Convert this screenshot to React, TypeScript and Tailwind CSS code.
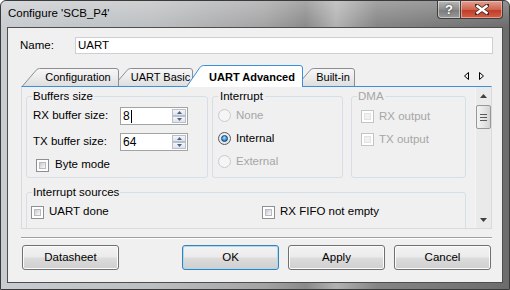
import React from "react";

const ui = "font-['Liberation_Sans',Arial,sans-serif]";

function CheckBox({ disabled = false }: { disabled?: boolean }) {
  return (
    <div
      className={`w-[13px] h-[13px] shrink-0 border p-[2px] bg-white ${
        disabled ? "border-[#c4c4c4]" : "border-[#8e8f8f]"
      }`}
    >
      <div
        className={`w-full h-full ${
          disabled
            ? "bg-[#f1f1f1] border border-[#e2e2e2]"
            : "bg-[linear-gradient(135deg,#c6c9ce,#eceded_70%,#f7f7f7)] border border-[#b8bcc2]"
        }`}
      />
    </div>
  );
}

function Radio({ checked = false, disabled = false }: { checked?: boolean; disabled?: boolean }) {
  return (
    <div
      className={`w-[13px] h-[13px] shrink-0 rounded-full border flex items-center justify-center ${
        disabled
          ? "border-[#cacaca] bg-[#f5f5f5]"
          : "border-[#555b63] bg-[radial-gradient(circle_at_50%_40%,#ffffff,#d6d9dc)]"
      }`}
    >
      {checked && (
        <div className="w-[7px] h-[7px] rounded-full border border-[#173c66] bg-[radial-gradient(circle_at_45%_35%,#9fe2ff,#1f78cf_75%)]" />
      )}
    </div>
  );
}

function SpinBtn({ up = false }: { up?: boolean }) {
  return (
    <div className="h-[7px] w-full border border-[#b9c0cb] bg-[linear-gradient(#f6f7f9,#dde2ea)] flex items-center justify-center">
      <svg width="5" height="3" viewBox="0 0 5 3">
        <path d={up ? "M0 3 L2.5 0 L5 3 Z" : "M0 0 L2.5 3 L5 0 Z"} fill="#4d6087" />
      </svg>
    </div>
  );
}

function SpinBox({ value, caret = false }: { value: string; caret?: boolean }) {
  return (
    <div className="w-[68px] h-[18px] border border-[#a3a3a3] bg-white flex items-center">
      <div className="flex-1 pl-[2px] flex items-center text-[12px] leading-[14px] text-black">
        {value}
        {caret && <span className="w-px h-[13px] bg-black ml-px" />}
      </div>
      <div className="w-[14px] h-[14px] mr-[1px] flex flex-col">
        <SpinBtn up />
        <SpinBtn />
      </div>
    </div>
  );
}

function Tab({
  label,
  w,
  idx,
  selected = false,
  className,
}: {
  label: string;
  w: number;
  idx: number;
  selected?: boolean;
  className: string;
}) {
  const t = selected ? 0.5 : 3.5;
  const b = selected ? 22 : 21;
  const d = `M0.5 ${b} L13.5 ${t + 2.5} Q15 ${t} 17.5 ${t} H${w - 3} Q${w - 0.5} ${t} ${w - 0.5} ${t + 2.5} V${b}`;
  return (
    <div
      className={`relative h-[21px] shrink-0 flex items-end justify-center pl-[17px] pr-[2px] pb-[2px] ${className}`}
    >
      <svg className="absolute left-0 top-0 overflow-visible" width={w} height={22}>
        <defs>
          <linearGradient id={`tabg${idx}`} x1="0" y1="0" x2="0" y2="1">
            <stop offset="0" stopColor="#f7f7f7" />
            <stop offset="0.5" stopColor="#ececec" />
            <stop offset="1" stopColor="#dedede" />
          </linearGradient>
        </defs>
        <path
          d={d}
          fill={selected ? "#ffffff" : `url(#tabg${idx})`}
          stroke={selected ? "#3c8fdc" : "#8c8e94"}
          strokeWidth="1"
        />
      </svg>
      <span
        className={`relative text-[11px] leading-[14px] text-black whitespace-nowrap ${
          selected ? "font-bold" : ""
        }`}
      >
        {label}
      </span>
    </div>
  );
}

function WinButton({ label, focused = false, className }: { label: string; focused?: boolean; className: string }) {
  return (
    <div
      className={`h-[25px] w-[97px] rounded-[3px] border flex items-center justify-center text-[11.5px] text-black bg-[linear-gradient(#f3f3f3_0%,#ebebeb_48%,#dcdcdc_52%,#cfcfcf_100%)] ${
        focused
          ? "border-[#3c7fb1] shadow-[inset_0_0_0_1px_#a9dbf6]"
          : "border-[#707070] shadow-[inset_0_0_0_1px_#fcfcfc]"
      } ${className}`}
    >
      {label}
    </div>
  );
}

export default function App() {
  return (
    <div className={`${ui} w-[510px] h-[290px] overflow-hidden bg-white`}>
      <div className="w-[510px] h-[290px] rounded-t-[6px] border border-[#3a3a3a] flex flex-col bg-[linear-gradient(90deg,#c9ccd0_0%,#bcbfc1_30%,#a3a3a4_52%,#8a8a8a_60%,#b2b2b2_66%,#858585_74%,#6c6c6c_100%)]">
        {/* title bar */}
        <div className="h-[26px] flex bg-[linear-gradient(rgba(255,255,255,0.25),rgba(255,255,255,0))] rounded-t-[5px]">
          <div className="self-center ml-[7px] text-[11.5px] text-black">Configure 'SCB_P4'</div>
          <div className="ml-auto mr-[6px] flex h-[18px]">
            <div className="w-[24px] h-full rounded-bl-[4px] border border-t-0 border-[#3d3d3d] shadow-[inset_0_0_0_1px_rgba(255,255,255,0.45)] bg-[linear-gradient(#b9b9b9,#8d8d8d_50%,#7a7a7a_51%,#9a9a9a)] flex items-center justify-center text-white font-bold text-[13px] leading-none [text-shadow:0_0_2px_#222]">
              ?
            </div>
            <div className="w-[42px] h-full rounded-br-[4px] border border-t-0 border-l-0 border-[#3d3d3d] shadow-[inset_0_0_0_1px_rgba(255,210,200,0.55)] bg-[linear-gradient(#e3a08f,#cf6450_50%,#c03a24_51%,#d1604a)] flex items-center justify-center">
              <svg width="14" height="11" viewBox="0 0 14 11">
                <path
                  d="M1 1 L13 10 M13 1 L1 10"
                  stroke="#4a2a25"
                  strokeWidth="4"
                  strokeLinecap="square"
                />
                <path d="M1.5 1.5 L12.5 9.5 M12.5 1.5 L1.5 9.5" stroke="#ffffff" strokeWidth="2.4" />
              </svg>
            </div>
          </div>
        </div>

        {/* client area */}
        <div className="ml-[6px] w-[496px] h-[256px] border border-[#4e4e4e] bg-[#f0f0f0] flex flex-col">
          {/* name */}
          <div className="mt-[9px] h-[17px] flex items-center">
            <div className="pl-[12px] w-[67px] text-[11.5px] text-black">Name:</div>
            <div className="w-[418px] h-[17px] border border-[#cbd0d5] bg-white flex items-center pl-[2px] text-[11.5px] text-black">
              UART
            </div>
          </div>

          {/* tabs */}
          <div className="relative z-10 mt-[11px] h-[21px] flex items-start pl-[14px]">
            <Tab label="Configuration" w={97} idx={1} className="w-[97px] z-[4]" />
            <Tab label="UART Basic" w={80} idx={2} className="w-[80px] ml-[-6px] z-[3]" />
            <Tab label="UART Advanced" w={117} idx={3} selected className="w-[117px] ml-[-7px] z-[5]" />
            <Tab label="Built-in" w={59} idx={4} className="w-[59px] ml-[-7px] z-[1]" />
            <div className="ml-auto mr-[17px] mt-[7px]">
              <svg width="21" height="8" viewBox="0 0 21 8">
                <path d="M4.5 0.5 L0.5 4 L4.5 7.5 Z" fill="none" stroke="#000" />
                <path d="M15.5 0.5 L19.5 4 L15.5 7.5 Z" fill="none" stroke="#000" />
              </svg>
            </div>
          </div>

          {/* tab panel */}
          <div className="ml-[13px] w-[471px] h-[143px] border-t border-t-[#3c8fdc] border-x border-b border-[#dadada] flex">
            <div className="w-[453px] h-full overflow-hidden text-[11.5px] text-black">
              <div className="flex items-start ml-[4px] mt-[2px]">
                {/* Buffers size */}
                <fieldset className="w-[182px] h-[89px] border border-[#d5dfe5] rounded-[3px] px-[5px] shrink-0">
                  <legend className="px-[1px] leading-[14px]">Buffers size</legend>
                  <div className="flex flex-col">
                    <div className="mt-[4px] flex items-center h-[18px]">
                      <div className="w-[88px] pl-px">RX buffer size:</div>
                      <SpinBox value="8" caret />
                    </div>
                    <div className="mt-[8px] flex items-center h-[18px]">
                      <div className="w-[88px] pl-px">TX buffer size:</div>
                      <SpinBox value="64" />
                    </div>
                    <div className="mt-[7px] flex items-center gap-[6px] ml-[4px] h-[14px]">
                      <CheckBox />
                      <span>Byte mode</span>
                    </div>
                  </div>
                </fieldset>

                {/* Interrupt */}
                <fieldset className="ml-[4px] w-[131px] h-[89px] border border-[#d5dfe5] rounded-[3px] px-[5px] shrink-0">
                  <legend className="px-[2px] leading-[14px]">Interrupt</legend>
                  <div className="flex flex-col gap-[10px] mt-[6px]">
                    <div className="flex items-center gap-[5px] h-[13px] text-[#a6a6a6]">
                      <Radio disabled />
                      <span>None</span>
                    </div>
                    <div className="flex items-center gap-[5px] h-[13px]">
                      <Radio checked />
                      <span>Internal</span>
                    </div>
                    <div className="flex items-center gap-[5px] h-[13px] text-[#a6a6a6]">
                      <Radio disabled />
                      <span>External</span>
                    </div>
                  </div>
                </fieldset>

                {/* DMA */}
                <fieldset className="ml-[8px] w-[115px] h-[89px] border border-[#d5dfe5] rounded-[3px] px-[5px] shrink-0 text-[#a6a6a6]">
                  <legend className="px-[1px] leading-[14px]">DMA</legend>
                  <div className="flex flex-col gap-[10px] mt-[7px] ml-[4px]">
                    <div className="flex items-center gap-[5px] h-[13px]">
                      <CheckBox disabled />
                      <span>RX output</span>
                    </div>
                    <div className="flex items-center gap-[5px] h-[13px]">
                      <CheckBox disabled />
                      <span>TX output</span>
                    </div>
                  </div>
                </fieldset>
              </div>

              {/* Interrupt sources */}
              <fieldset className="ml-[4px] mt-[7px] w-[440px] h-[70px] border border-[#d5dfe5] rounded-[3px] px-[5px]">
                <legend className="px-[1px] leading-[14px]">Interrupt sources</legend>
                <div className="flex mt-[6px]">
                  <div className="w-[231px] flex items-center gap-[5px] h-[14px] -ml-px">
                    <CheckBox />
                    <span>UART done</span>
                  </div>
                  <div className="flex items-center gap-[5px] h-[14px]">
                    <CheckBox />
                    <span>RX FIFO not empty</span>
                  </div>
                </div>
              </fieldset>
            </div>

            {/* scrollbar */}
            <div className="w-[16px] h-full bg-[#eaeaea] border-l border-[#f4f4f4] flex flex-col items-center">
              <div className="h-[17px] flex items-center justify-center">
                <svg width="7" height="4" viewBox="0 0 7 4">
                  <path d="M0 4 L3.5 0 L7 4 Z" fill="#3f3f3f" />
                </svg>
              </div>
              <div className="mt-[1px] w-[15px] h-[24px] rounded-[2px] border border-[#979797] bg-[linear-gradient(90deg,#f4f4f4,#e6e6e6_50%,#d3d3d3)] flex flex-col items-center justify-center gap-[2px]">
                <div className="w-[7px] h-px bg-[#5a5a5a]" />
                <div className="w-[7px] h-px bg-[#5a5a5a]" />
                <div className="w-[7px] h-px bg-[#5a5a5a]" />
              </div>
              <div className="mt-auto h-[17px] flex items-center justify-center">
                <svg width="7" height="4" viewBox="0 0 7 4">
                  <path d="M0 0 L3.5 4 L7 0 Z" fill="#3f3f3f" />
                </svg>
              </div>
            </div>
          </div>

          {/* separator */}
          <div className="mt-[8px] ml-[13px] w-[471px] h-px bg-[#a0a0a0]" />
          <div className="ml-[13px] w-[471px] h-px bg-white" />

          {/* buttons */}
          <div className="mt-[6px] flex">
            <WinButton label="Datasheet" className="ml-[14px]" />
            <WinButton label="OK" focused className="ml-[63px]" />
            <WinButton label="Apply" className="ml-[9px]" />
            <WinButton label="Cancel" className="ml-[9px]" />
          </div>
        </div>
      </div>
    </div>
  );
}
